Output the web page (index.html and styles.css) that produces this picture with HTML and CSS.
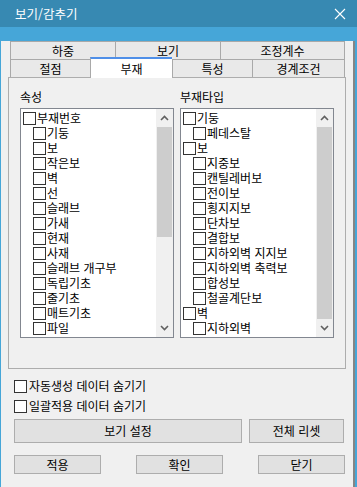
FILE: index.html
```html
<!DOCTYPE html>
<html lang="ko">
<head>
    <meta charset="UTF-8">
    <meta name="viewport" content="width=device-width, initial-scale=1.0">
    <title>보기/감추기</title>
    <link rel="stylesheet" href="styles.css">
</head>
<body>
    <div class="titlebar">
        <span class="title">보기/감추기</span>
        <svg class="close" width="12" height="12" viewBox="0 0 12 12">
            <path d="M1 1 L11 11 M11 1 L1 11" stroke="#fff" stroke-width="1.1" fill="none"/>
        </svg>
    </div>
    <div class="frame">
        <div class="tabs">
            <div class="tab-row row-top">
                <div class="tab">하중</div>
                <div class="tab">보기</div>
                <div class="tab last">조정계수</div>
            </div>
            <div class="tab-row row-bottom">
                <div class="tab">절점</div>
                <div class="tab active">부재</div>
                <div class="tab">특성</div>
                <div class="tab last">경계조건</div>
            </div>
        </div>
        <div class="panel">
            <div class="group">
                <div class="label">속성</div>
                <div class="listbox">
                    <ul class="items">
                        <li><span class="box"></span>부재번호</li>
                        <li class="child"><span class="box"></span>기둥</li>
                        <li class="child"><span class="box"></span>보</li>
                        <li class="child"><span class="box"></span>작은보</li>
                        <li class="child"><span class="box"></span>벽</li>
                        <li class="child"><span class="box"></span>선</li>
                        <li class="child"><span class="box"></span>슬래브</li>
                        <li class="child"><span class="box"></span>가새</li>
                        <li class="child"><span class="box"></span>현재</li>
                        <li class="child"><span class="box"></span>사재</li>
                        <li class="child"><span class="box"></span>슬래브 개구부</li>
                        <li class="child"><span class="box"></span>독립기초</li>
                        <li class="child"><span class="box"></span>줄기초</li>
                        <li class="child"><span class="box"></span>매트기초</li>
                        <li class="child"><span class="box"></span>파일</li>
                        <li class="child"><span class="box"></span>프리캐스트기초</li>
                    </ul>
                    <div class="scrollbar">
                        <svg class="arrow" width="9" height="6" viewBox="0 0 9 6"><path d="M1 5 L4.5 1.5 L8 5" stroke="#606060" stroke-width="1.6" fill="none"/></svg>
                        <div class="track"><div class="thumb short"></div></div>
                        <svg class="arrow" width="9" height="6" viewBox="0 0 9 6"><path d="M1 1 L4.5 4.5 L8 1" stroke="#606060" stroke-width="1.6" fill="none"/></svg>
                    </div>
                </div>
            </div>
            <div class="group">
                <div class="label">부재타입</div>
                <div class="listbox">
                    <ul class="items">
                        <li><span class="box"></span>기둥</li>
                        <li class="child"><span class="box"></span>페데스탈</li>
                        <li><span class="box"></span>보</li>
                        <li class="child"><span class="box"></span>지중보</li>
                        <li class="child"><span class="box"></span>캔틸레버보</li>
                        <li class="child"><span class="box"></span>전이보</li>
                        <li class="child"><span class="box"></span>횡지지보</li>
                        <li class="child"><span class="box"></span>단차보</li>
                        <li class="child"><span class="box"></span>결합보</li>
                        <li class="child"><span class="box"></span>지하외벽 지지보</li>
                        <li class="child"><span class="box"></span>지하외벽 축력보</li>
                        <li class="child"><span class="box"></span>합성보</li>
                        <li class="child"><span class="box"></span>철골계단보</li>
                        <li><span class="box"></span>벽</li>
                        <li class="child"><span class="box"></span>지하외벽</li>
                        <li class="child"><span class="box"></span>코어벽</li>
                    </ul>
                    <div class="scrollbar">
                        <svg class="arrow" width="9" height="6" viewBox="0 0 9 6"><path d="M1 5 L4.5 1.5 L8 5" stroke="#606060" stroke-width="1.6" fill="none"/></svg>
                        <div class="track"><div class="thumb long"></div></div>
                        <svg class="arrow" width="9" height="6" viewBox="0 0 9 6"><path d="M1 1 L4.5 4.5 L8 1" stroke="#606060" stroke-width="1.6" fill="none"/></svg>
                    </div>
                </div>
            </div>
        </div>
        <div class="options">
            <label class="option"><span class="box"></span>자동생성 데이터 숨기기</label>
            <label class="option"><span class="box"></span>일괄적용 데이터 숨기기</label>
        </div>
        <div class="actions">
            <button class="btn wide">보기 설정</button>
            <button class="btn reset">전체 리셋</button>
        </div>
        <div class="footer">
            <button class="btn small">적용</button>
            <button class="btn small">확인</button>
            <button class="btn small">닫기</button>
        </div>
    </div>
</body>
</html>
```

FILE: styles.css
```css
* {
    box-sizing: border-box;
    margin: 0;
    padding: 0;
}
html, body {
    height: 100%;
}
body {
    background-color: #46a6d8;
    color: #000;
    font-family: "Noto Sans CJK KR", "Liberation Sans", sans-serif;
    font-size: 12px;
    overflow: hidden;
}
.titlebar {
    align-items: center;
    background-color: #3789b2;
    color: #fff;
    display: flex;
    height: 27px;
    justify-content: space-between;
    padding: 0 11px 0 15px;
}
.title {
    font-size: 12.5px;
    line-height: 16px;
}
.frame {
    background-color: #f0f0f0;
    border-bottom: 2px solid #858585;
    border-right: 2px solid #858585;
    height: 459px;
    margin-left: 1px;
    width: 354px;
}
.tabs {
    margin: 14px 0 0 9px;
    width: 335px;
}
.tab-row {
    display: grid;
    height: 18px;
}
.row-top {
    grid-template-columns: 105px 105px 125px;
}
.row-bottom {
    grid-template-columns: 80px 82px 80px 93px;
}
.tab {
    align-items: center;
    background-color: #e9e9e9;
    border-left: 1px solid #a9a9a9;
    border-top: 1px solid #a9a9a9;
    display: flex;
    justify-content: center;
    line-height: 16px;
}
.tab.last {
    border-right: 1px solid #a9a9a9;
}
.tab.active {
    background-color: #fff;
    border-top: 2px solid #4f8fe8;
    margin: -2px 0 -1px;
    position: relative;
    z-index: 1;
    padding-top: 1px;
}
.tab.active + .tab {
    border-left: 1px solid #a9a9a9;
}
.panel {
    border: 1px solid #adadad;
    display: flex;
    gap: 6px;
    height: 292px;
    margin-left: 7px;
    padding: 11px 0 0 11px;
    width: 338px;
}
.label {
    height: 19px;
    line-height: 16px;
}
.listbox {
    background-color: #fff;
    border: 1px solid #828790;
    display: flex;
    height: 230px;
    overflow: hidden;
    width: 154px;
}
.items {
    flex: 1;
    list-style: none;
    overflow: hidden;
    padding-top: 1px;
    white-space: nowrap;
}
.items li {
    align-items: flex-end;
    display: flex;
    height: 15px;
    line-height: 15px;
    padding-left: 2px;
}
.items li.child {
    padding-left: 12px;
}
.box {
    background-color: #fff;
    border: 1px solid #333;
    display: inline-block;
    flex: none;
    height: 13px;
    margin-right: 1px;
    width: 13px;
}
.scrollbar {
    align-items: center;
    background-color: #f0f0f0;
    display: flex;
    flex-direction: column;
    width: 17px;
}
.arrow {
    flex: none;
    margin: 6px 0;
}
.track {
    flex: 1;
    width: 100%;
    padding: 0 1px;
}
.thumb {
    background-color: #cdcdcd;
}
.thumb.short {
    height: 110px;
}
.thumb.long {
    height: 100%;
}
.options {
    display: flex;
    flex-direction: column;
    gap: 4px;
    margin: 9px 0 0 13px;
}
.option {
    align-items: center;
    display: flex;
    height: 16px;
    line-height: 16px;
}
.option .box {
    margin-right: 2px;
}
.btn {
    background-color: #e1e1e1;
    border: 1px solid #adadad;
    color: #000;
    font-family: inherit;
    font-size: 12px;
    line-height: 16px;
}
.actions {
    display: flex;
    gap: 7px;
    margin: 5px 0 0 13px;
}
.btn.wide {
    height: 24px;
    width: 228px;
}
.btn.reset {
    height: 24px;
    width: 95px;
}
.footer {
    display: flex;
    justify-content: space-between;
    margin: 12px 0 0 13px;
    width: 331px;
}
.btn.small {
    height: 19px;
    width: 87px;
}
```
